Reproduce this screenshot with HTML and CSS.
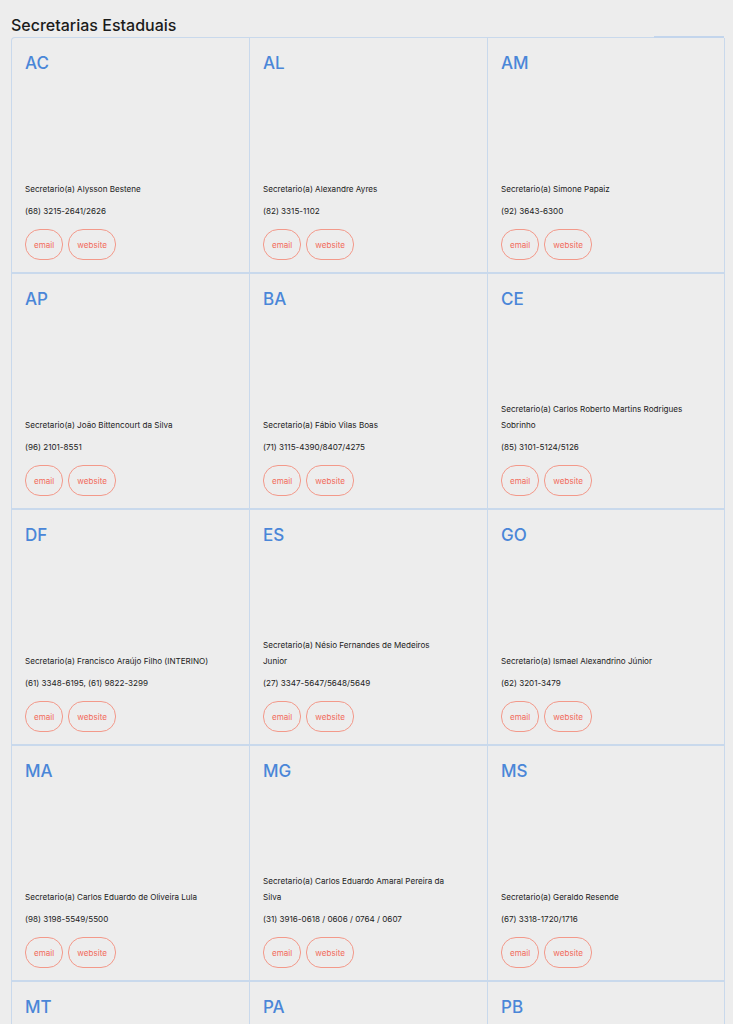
FILE: index.html
```html
<!DOCTYPE html>
<html lang="pt-BR">
<head>
    <meta charset="UTF-8">
    <meta name="viewport" content="width=device-width, initial-scale=1.0">
    <title>Secretarias Estaduais</title>
    <link rel="stylesheet" href="styles.css">
</head>
<body>
    <h2 class="section-title">Secretarias Estaduais</h2>

    <div class="states">
        <div class="state-card">
            <h3 class="state-uf">AC</h3>
            <div class="state-info">
                <p class="state-name">Secretario(a) Alysson Bestene</p>
                <p class="state-phone">(68) 3215-2641/2626</p>
                <div class="state-links">
                    <a class="pill" href="#">email</a>
                    <a class="pill" href="#">website</a>
                </div>
            </div>
        </div>
        <div class="state-card">
            <h3 class="state-uf">AL</h3>
            <div class="state-info">
                <p class="state-name">Secretario(a) Alexandre Ayres</p>
                <p class="state-phone">(82) 3315-1102</p>
                <div class="state-links">
                    <a class="pill" href="#">email</a>
                    <a class="pill" href="#">website</a>
                </div>
            </div>
        </div>
        <div class="state-card">
            <h3 class="state-uf">AM</h3>
            <div class="state-info">
                <p class="state-name">Secretario(a) Simone Papaiz</p>
                <p class="state-phone">(92) 3643-6300</p>
                <div class="state-links">
                    <a class="pill" href="#">email</a>
                    <a class="pill" href="#">website</a>
                </div>
            </div>
        </div>

        <div class="state-card">
            <h3 class="state-uf">AP</h3>
            <div class="state-info">
                <p class="state-name">Secretario(a) João Bittencourt da Silva</p>
                <p class="state-phone">(96) 2101-8551</p>
                <div class="state-links">
                    <a class="pill" href="#">email</a>
                    <a class="pill" href="#">website</a>
                </div>
            </div>
        </div>
        <div class="state-card">
            <h3 class="state-uf">BA</h3>
            <div class="state-info">
                <p class="state-name">Secretario(a) Fábio Vilas Boas</p>
                <p class="state-phone">(71) 3115-4390/8407/4275</p>
                <div class="state-links">
                    <a class="pill" href="#">email</a>
                    <a class="pill" href="#">website</a>
                </div>
            </div>
        </div>
        <div class="state-card">
            <h3 class="state-uf">CE</h3>
            <div class="state-info">
                <p class="state-name">Secretario(a) Carlos Roberto Martins Rodrigues Sobrinho</p>
                <p class="state-phone">(85) 3101-5124/5126</p>
                <div class="state-links">
                    <a class="pill" href="#">email</a>
                    <a class="pill" href="#">website</a>
                </div>
            </div>
        </div>

        <div class="state-card">
            <h3 class="state-uf">DF</h3>
            <div class="state-info">
                <p class="state-name">Secretario(a) Francisco Araújo Filho (INTERINO)</p>
                <p class="state-phone">(61) 3348-6195, (61) 9822-3299</p>
                <div class="state-links">
                    <a class="pill" href="#">email</a>
                    <a class="pill" href="#">website</a>
                </div>
            </div>
        </div>
        <div class="state-card">
            <h3 class="state-uf">ES</h3>
            <div class="state-info">
                <p class="state-name">Secretario(a) Nésio Fernandes de Medeiros Junior</p>
                <p class="state-phone">(27) 3347-5647/5648/5649</p>
                <div class="state-links">
                    <a class="pill" href="#">email</a>
                    <a class="pill" href="#">website</a>
                </div>
            </div>
        </div>
        <div class="state-card">
            <h3 class="state-uf">GO</h3>
            <div class="state-info">
                <p class="state-name">Secretario(a) Ismael Alexandrino Júnior</p>
                <p class="state-phone">(62) 3201-3479</p>
                <div class="state-links">
                    <a class="pill" href="#">email</a>
                    <a class="pill" href="#">website</a>
                </div>
            </div>
        </div>

        <div class="state-card">
            <h3 class="state-uf">MA</h3>
            <div class="state-info">
                <p class="state-name">Secretario(a) Carlos Eduardo de Oliveira Lula</p>
                <p class="state-phone">(98) 3198-5549/5500</p>
                <div class="state-links">
                    <a class="pill" href="#">email</a>
                    <a class="pill" href="#">website</a>
                </div>
            </div>
        </div>
        <div class="state-card">
            <h3 class="state-uf">MG</h3>
            <div class="state-info">
                <p class="state-name">Secretario(a) Carlos Eduardo Amaral Pereira da Silva</p>
                <p class="state-phone">(31) 3916-0618 / 0606 / 0764 / 0607</p>
                <div class="state-links">
                    <a class="pill" href="#">email</a>
                    <a class="pill" href="#">website</a>
                </div>
            </div>
        </div>
        <div class="state-card">
            <h3 class="state-uf">MS</h3>
            <div class="state-info">
                <p class="state-name">Secretario(a) Geraldo Resende</p>
                <p class="state-phone">(67) 3318-1720/1716</p>
                <div class="state-links">
                    <a class="pill" href="#">email</a>
                    <a class="pill" href="#">website</a>
                </div>
            </div>
        </div>

        <!-- the rest of the list continues below the fold -->
        <div class="state-card">
            <h3 class="state-uf">MT</h3>
        </div>
        <div class="state-card">
            <h3 class="state-uf">PA</h3>
        </div>
        <div class="state-card">
            <h3 class="state-uf">PB</h3>
        </div>
    </div>
</body>
</html>
```

FILE: styles.css
```css
body {
    margin: 0;
    padding: 0 9px 0 11px;
    background-color: #ededed;
    font-family: Inter, "Noto Sans", sans-serif;
    color: #222;
}

.section-title {
    margin: 15px 0 2px;
    font-size: 16px;
    font-weight: 500;
    line-height: 20px;
    color: #1b1b1b;
}

.states {
    position: relative;
    display: grid;
    grid-template-columns: 238px 238px 237px;
    grid-auto-rows: 236px;
    border-top: 1px solid #c9d9ec;
    border-left: 1px solid #c9d9ec;
    border-top-left-radius: 4px;
}

/* thicker highlight on the top right edge */
.states::after {
    content: "";
    position: absolute;
    top: -2px;
    right: 0;
    width: 70px;
    height: 2px;
    background-color: #c3d5ec;
}

.state-card {
    display: flex;
    flex-direction: column;
    padding: 13px 34px 12px 13px;
    border-right: 1px solid #c9d9ec;
    border-bottom: 2px solid #c9d9ec;
}

.state-uf {
    margin: 0;
    font-size: 17px;
    font-weight: 500;
    line-height: 24px;
    color: #4a86d8;
}

.state-info {
    margin-top: auto;
}

.state-name {
    margin: 0 0 6px;
    font-size: 8.1px;
    line-height: 16px;
    color: #222;
}

.state-phone {
    margin: 0 0 10px;
    font-size: 8.1px;
    line-height: 16px;
    color: #222;
}

.state-links {
    display: flex;
    gap: 5px;
}

.pill {
    display: inline-flex;
    align-items: center;
    height: 29px;
    padding: 0 8px;
    border: 1px solid #f3998a;
    border-radius: 15px;
    font-size: 8.1px;
    color: #f26b5b;
    text-decoration: none;
}
```
